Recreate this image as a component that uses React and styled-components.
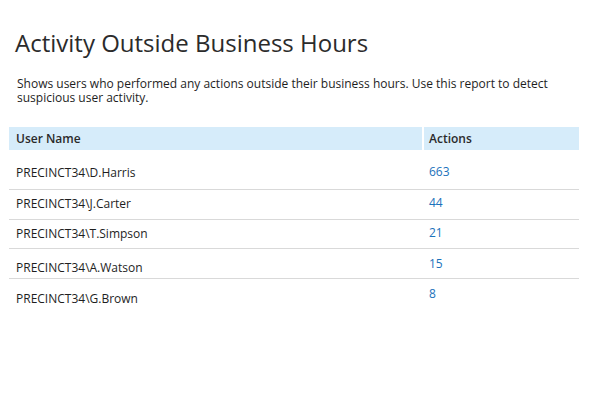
import styled, { createGlobalStyle } from "styled-components";

const Global = createGlobalStyle`
  body {
    margin: 0;
    background: #ffffff;
    font-family: "Open Sans", "Noto Sans", sans-serif;
    color: #262626;
  }
`;

const Page = styled.div`
  width: 590px;
  height: 395px;
  padding: 27px 11px 0 9px;
  box-sizing: border-box;
`;

const Title = styled.h1`
  margin: 0 0 0 6px;
  font-size: 24px;
  font-weight: 400;
  line-height: 32px;
  color: #2b2b2b;
`;

const Description = styled.p`
  margin: 18px 0 0 8px;
  font-size: 12px;
  line-height: 14px;
  color: #1e1e1e;
  width: 560px;
`;

const Table = styled.div`
  margin-top: 22px;
  width: 570px;
`;

const HeaderRow = styled.div`
  display: grid;
  grid-template-columns: 413px 1fr;
  height: 23px;
  background: #d6ecfa;
`;

const HeaderCell = styled.div`
  display: flex;
  align-items: center;
  padding-left: ${(p) => (p.$first ? "7px" : "5px")};
  font-size: 12px;
  font-weight: 600;
  color: #2a2a2a;
  border-left: ${(p) => (p.$first ? "none" : "2px solid #ffffff")};
`;

const Body = styled.div`
  padding-top: 10px;
`;

const Row = styled.div`
  display: grid;
  grid-template-columns: 413px 1fr;
  height: ${(p) => p.$h}px;
  border-bottom: ${(p) => (p.$last ? "none" : "1px solid #d9d9d9")};
  box-sizing: border-box;
`;

const NameCell = styled.div`
  padding: ${(p) => p.$top}px 0 0 7px;
  font-size: 12px;
  line-height: 14px;
  color: #1e1e1e;
`;

const ActionCell = styled.a`
  padding: ${(p) => p.$top}px 0 0 7px;
  font-size: 12px;
  line-height: 14px;
  color: #1b72bb;
  text-decoration: none;
`;

const rows = [
  { name: "PRECINCT34\\D.Harris", actions: 663, h: 30, nameTop: 6, actTop: 5 },
  { name: "PRECINCT34\\J.Carter", actions: 44, h: 30, nameTop: 7, actTop: 6 },
  { name: "PRECINCT34\\T.Simpson", actions: 21, h: 29, nameTop: 7, actTop: 6 },
  { name: "PRECINCT34\\A.Watson", actions: 15, h: 30, nameTop: 12, actTop: 8 },
  { name: "PRECINCT34\\G.Brown", actions: 8, h: 30, nameTop: 13, actTop: 8 },
];

export default function App() {
  return (
    <Page>
      <Global />
      <Title>Activity Outside Business Hours</Title>
      <Description>
        Shows users who performed any actions outside their business hours. Use this report to detect
        suspicious user activity.
      </Description>
      <Table>
        <HeaderRow>
          <HeaderCell $first>User Name</HeaderCell>
          <HeaderCell>Actions</HeaderCell>
        </HeaderRow>
        <Body>
          {rows.map((r, i) => (
            <Row key={r.name} $h={r.h} $last={i === rows.length - 1}>
              <NameCell $top={r.nameTop}>{r.name}</NameCell>
              <ActionCell $top={r.actTop}>{r.actions}</ActionCell>
            </Row>
          ))}
        </Body>
      </Table>
    </Page>
  );
}
